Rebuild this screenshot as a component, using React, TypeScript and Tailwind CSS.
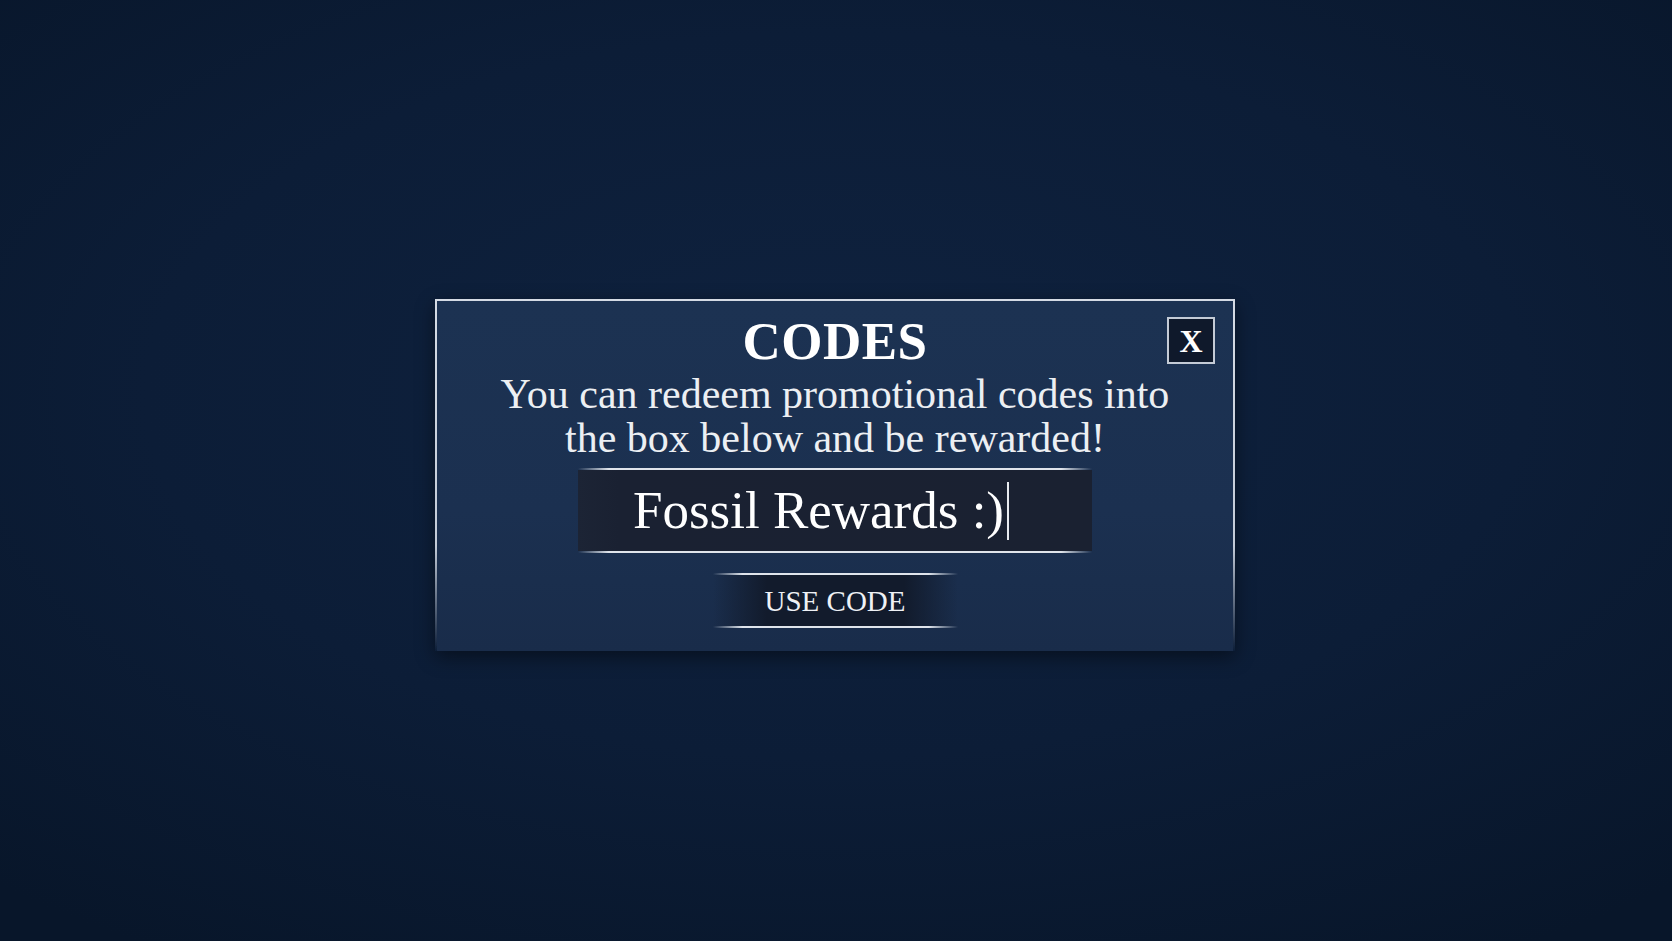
export default function App() {
  return (
    <div
      className="h-screen w-full overflow-hidden bg-[radial-gradient(ellipse_75%_70%_at_50%_42%,#0f223f_0%,#0c1d37_55%,#08162a_100%)] pl-[435px] pt-[299px]"
      style={{ fontFamily: '"Liberation Serif", "Times New Roman", serif' }}
    >
      {/* Frame: light edge on top and sides, fading at the bottom */}
      <div className="w-[800px] bg-[linear-gradient(to_bottom,#d5dbe4_0%,#c3cbd8_70%,rgba(195,203,216,0)_100%)] px-[2px] pt-[2px] shadow-[0_6px_18px_rgba(0,0,0,0.45)]">
        <div className="relative flex h-[350px] flex-col items-center bg-[linear-gradient(to_bottom,#1c3252_0%,#1b3050_60%,#192c4a_100%)] text-[#f1f3f6]">
          {/* Close button */}
          <button className="absolute right-[18px] top-[16px] flex h-[47px] w-[48px] items-center justify-center border-2 border-[#c4cbd6] bg-[#0f192b] text-[32px] font-bold leading-none text-white">
            X
          </button>

          <h1 className="mt-[10px] text-[53px] font-bold leading-[60px] tracking-[0.5px] text-white">CODES</h1>

          <p className="mt-[1px] text-center text-[42px] leading-[44px] text-[#eceff3]">
            You can redeem promotional codes into
            <br />
            the box below and be rewarded!
          </p>

          {/* Code input */}
          <div className="mt-[8px] flex w-[514px] flex-col">
            <div className="h-[2px] bg-[linear-gradient(to_right,rgba(220,226,234,0)_0%,#dfe4eb_6%,#dfe4eb_94%,rgba(220,226,234,0)_100%)]" />
            <div className="flex h-[81px] items-center bg-[linear-gradient(to_right,#1c2435_0%,#1a2132_8%,#1a2131_100%)] pl-[55px]">
              <span className="text-[53px] leading-none text-white">Fossil Rewards :)</span>
              <span className="ml-[3px] h-[58px] w-[2px] bg-[#e8ebf0]" />
            </div>
            <div className="h-[2px] bg-[linear-gradient(to_right,rgba(220,226,234,0)_0%,#dfe4eb_6%,#dfe4eb_94%,rgba(220,226,234,0)_100%)]" />
          </div>

          {/* Use code button */}
          <div className="mt-[20px] flex w-[245px] flex-col">
            <div className="h-[2px] bg-[linear-gradient(to_right,rgba(220,226,234,0)_0%,#dfe4eb_12%,#dfe4eb_88%,rgba(220,226,234,0)_100%)]" />
            <button className="flex h-[51px] items-center justify-center bg-[linear-gradient(to_right,rgba(16,25,42,0)_0%,#121b2c_22%,#121b2c_78%,rgba(16,25,42,0)_100%)] pt-[1px] text-[29px] leading-none text-[#eef1f5]">
              USE CODE
            </button>
            <div className="h-[2px] bg-[linear-gradient(to_right,rgba(220,226,234,0)_0%,#dfe4eb_12%,#dfe4eb_88%,rgba(220,226,234,0)_100%)]" />
          </div>
        </div>
      </div>
    </div>
  );
}
